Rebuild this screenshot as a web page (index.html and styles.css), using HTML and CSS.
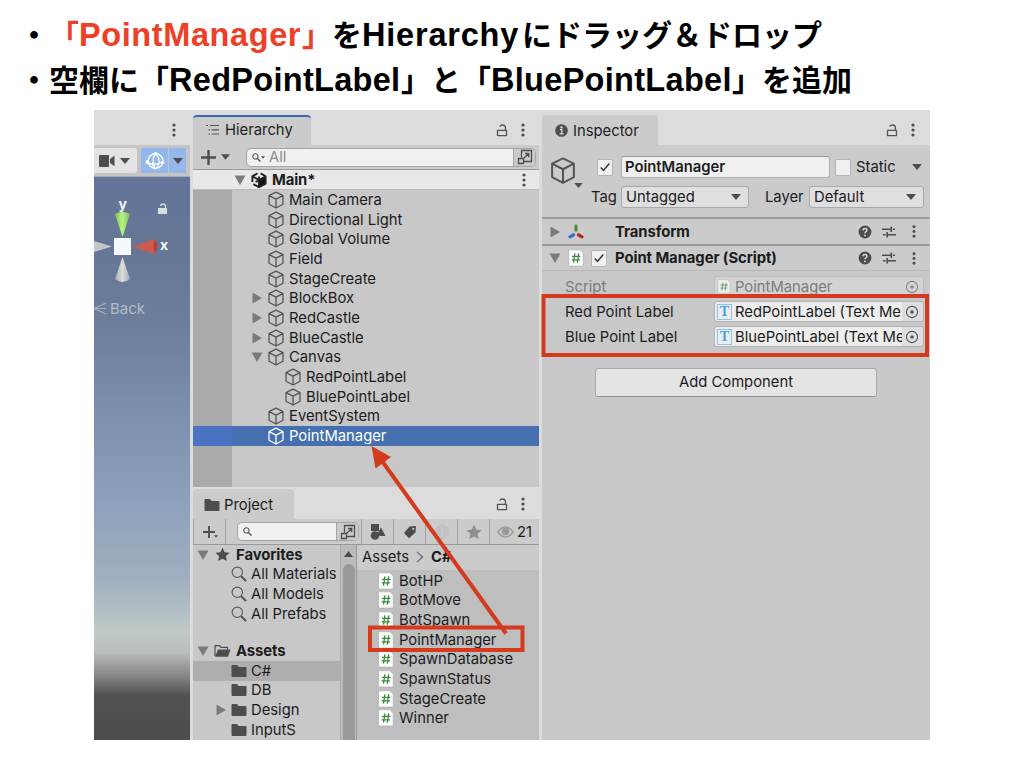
FILE: index.html
```html
<!DOCTYPE html>
<html lang="ja">
<head>
  <meta charset="UTF-8">
  <meta name="viewport" content="width=device-width, initial-scale=1.0">
  <title>PointManager</title>
  <link rel="stylesheet" href="styles.css">
</head>
<body>

  <!-- Icon definitions -->
  <svg class="defs" width="0" height="0">
    <symbol id="cube" viewBox="0 0 18 18">
      <path d="M9 1.2 16 4.6V13.2L9 17 2 13.2V4.6ZM2 4.6 9 8.2 16 4.6M9 8.2V17" fill="none" stroke="currentColor" stroke-width="1.3" stroke-linejoin="round"/>
    </symbol>
    <symbol id="unity" viewBox="0 0 18 18">
      <path d="M9 9V16.4L15.8 12.8V5.2Z" fill="#111"/>
      <path d="M7.4 2.4 2.4 5.2V11M10.6 2.4 15.6 5.2V12.6L9 16.2 3.4 13.2M2.4 5.2 9 9 15.6 5.2M9 9V16M9 9V5.5M9 9 5.6 11" fill="none" stroke="#222" stroke-width="1.9"/>
    </symbol>
    <symbol id="down" viewBox="0 0 12 12"><path d="M.5 1.5H11.5L6 11Z" fill="currentColor"/></symbol>
    <symbol id="right" viewBox="0 0 12 12"><path d="M1.5 .5V11.5L11 6Z" fill="currentColor"/></symbol>
    <symbol id="caret" viewBox="0 0 10 6"><path d="M0 0H10L5 6Z" fill="currentColor"/></symbol>
    <symbol id="dots" viewBox="0 0 4 14">
      <circle cx="2" cy="2" r="1.6"/><circle cx="2" cy="7" r="1.6"/><circle cx="2" cy="12" r="1.6"/>
    </symbol>
    <symbol id="lock" viewBox="0 0 12 14">
      <path d="M1.5 7.4H10.5V12.6H1.5ZM9.4 7V4.2C9.4 2.6 8.3 2 6.6 2 5.2 2 4.2 2.4 3.8 3.4" fill="none" stroke="currentColor" stroke-width="1.3" stroke-linejoin="round"/>
    </symbol>
    <symbol id="plus" viewBox="0 0 14 14"><path d="M7 0V14M0 7H14" stroke="currentColor" stroke-width="2.2"/></symbol>
    <symbol id="popout" viewBox="0 0 16 16">
      <path d="M4.5 8.5V1.5H14.5V12.5H7M1.5 9.5H6.5V14.5H1.5ZM7 9 11.5 4.7M8 4.5H11.7V8.2" fill="none" stroke="currentColor" stroke-width="1.3"/>
    </symbol>
    <symbol id="find" viewBox="0 0 16 16">
      <circle cx="6.3" cy="6.3" r="5.2" fill="none" stroke="currentColor" stroke-width="1.1"/>
      <path d="M10.2 10.2 15 15" stroke="currentColor" stroke-width="2.1"/>
    </symbol>
    <symbol id="mini-find" viewBox="0 0 10 10">
      <circle cx="3.8" cy="3.8" r="2.9" fill="none" stroke="currentColor" stroke-width="1.2"/>
      <path d="M6 6 9.4 9.4" stroke="currentColor" stroke-width="1.6"/>
    </symbol>
    <symbol id="folder" viewBox="0 0 16 14"><path d="M.5 2Q.5 1 1.5 1H6L7.6 3H14.5Q15.5 3 15.5 4V12Q15.5 13 14.5 13H1.5Q.5 13 .5 12Z" fill="currentColor"/></symbol>
    <symbol id="folder-open" viewBox="0 0 17 14">
      <path d="M1 12V1.6H5.6L7 3.4H13.5V5.6" fill="none" stroke="currentColor" stroke-width="1.2"/>
      <path d="M4 5.6H16.5L14 12.8H1Z" fill="currentColor"/>
    </symbol>
    <symbol id="star" viewBox="0 0 16 16"><path d="M8 .8 10.2 5.6 15.5 6.2 11.6 9.8 12.6 15 8 12.4 3.4 15 4.4 9.8 .5 6.2 5.8 5.6Z" fill="currentColor"/></symbol>
    <symbol id="script" viewBox="0 0 16 18">
      <path d="M1.5 .8H12L15.2 4V16Q15.2 17 14.2 17H1.5Q.6 17 .6 16V1.7Q.6 .8 1.5 .8Z" fill="#fff" stroke="#b0b0b0" stroke-width=".7"/>
      <path d="M6.9 4.4 5.5 13.6M10.7 4.4 9.3 13.6M4 7.3H12.4M3.6 10.8H12" stroke="#3d8a3d" stroke-width="1.3"/>
    </symbol>
    <symbol id="help" viewBox="0 0 14 14">
      <circle cx="7" cy="7" r="6.4" fill="#4d4d4d"/>
      <path d="M5 5.4Q5.1 3.5 7 3.5T9 5.2Q9 6.3 7.8 6.8 7 7.2 7 8.2" fill="none" stroke="#ddd" stroke-width="1.4"/>
      <circle cx="7" cy="10.4" r=".9" fill="#ddd"/>
    </symbol>
    <symbol id="preset" viewBox="0 0 14 12">
      <path d="M0 3.3H8.6M11 3.3H13M9.3 .5V6M1 8.8H3.6M6 8.8H14M5.2 6V11.6" fill="none" stroke="#4d4d4d" stroke-width="1.6"/>
    </symbol>
    <symbol id="check" viewBox="0 0 12 12"><path d="M1.8 6.4 4.5 9.4 10.3 2.4" fill="none" stroke="#333" stroke-width="1.5"/></symbol>
    <symbol id="picker" viewBox="0 0 14 14">
      <circle cx="7" cy="7" r="5.6" fill="none" stroke="#555" stroke-width="1.1"/><circle cx="7" cy="7" r="1.8" fill="#555"/>
    </symbol>
  </svg>

  <!-- Slide bullets -->
  <ul class="bullets">
    <li>・<span class="red">「<span class="latin w-name">PointManager</span>」</span>を<span class="latin w-hierarchy">Hierarchy</span>にドラッグ＆ドロップ</li>
    <li>・空欄に「<span class="latin w-red">RedPointLabel</span>」と「<span class="latin w-blue">BluePointLabel</span>」を追加</li>
  </ul>

  <div class="editor">

    <!-- Scene view -->
    <section class="scene">
      <div class="tab-bar"><svg class="dots"><use href="#dots"/></svg></div>
      <div class="scene-tools">
        <div class="camera">
          <svg width="16" height="12" viewBox="0 0 16 12"><rect width="10" height="12" rx="1"/><path d="M11 4 15.5 .8V11.2L11 8Z"/></svg>
          <svg class="caret"><use href="#caret"/></svg>
        </div>
        <div class="gizmo-btn">
          <svg width="20" height="18" viewBox="0 0 20 18" fill="none" stroke="#fff" stroke-width="1.2">
            <circle cx="10.5" cy="9" r="7.4"/><path d="M10.500 1.600Q7 6 8.500 12.500T10.500 16.400M10.500 1.600Q15 6 14 11T10.500 16.400M2 10Q5 12 8.500 12.300T18 10"/>
            <g fill="#fff"><circle cx="10.500" cy="1.800" r="1.200"/><circle cx="2.200" cy="10" r="1.300"/><circle cx="17.500" cy="10.500" r="1.200"/><circle cx="8.500" cy="12.500" r="1.300"/></g>
          </svg>
        </div>
        <div class="gizmo-drop"><svg class="caret"><use href="#caret"/></svg></div>
      </div>
      <div class="viewport">
        <svg width="96" height="150" viewBox="0 0 96 150">
          <defs>
            <linearGradient id="green"><stop offset="0" stop-color="#83c655"/><stop offset=".5" stop-color="#b6f584"/><stop offset="1" stop-color="#7cba56"/></linearGradient>
            <linearGradient id="grey"><stop offset="0" stop-color="#aaa"/><stop offset=".5" stop-color="#ddd"/><stop offset="1" stop-color="#aaa"/></linearGradient>
          </defs>
          <path d="M21 37Q28.500 33 36 37L28.500 60Z" fill="url(#green)"/>
          <path d="M28.500 80 21 102Q28.500 108 36 102Z" fill="url(#grey)"/>
          <path d="M0 64 18 69.500 0 75Z" fill="#c4c7ca"/>
          <path d="M39 69.500 61 62Q66 69.500 61 77Z" fill="#cf5a4c"/>
          <path d="M61 62Q66 69.500 61 77 58 69.500 61 62Z" fill="#a84840"/>
          <rect x="20" y="61" width="17" height="17" fill="#f5f8ff"/>
          <rect x="64" y="31" width="9" height="6" fill="#d9dde4"/>
          <path d="M71.500 31V29Q71 27 69 27T66.500 29" fill="none" stroke="#d9dde4" stroke-width="1.300"/>
          <path d="M12 126 0 131.500 12 137M0 131.500H12" fill="none" stroke="#a5afbd" stroke-width="1.200"/>
          <text x="24.500" y="32" class="axis">y</text>
          <text x="66" y="73" class="axis">x</text>
          <text x="16" y="137" class="back">Back</text>
        </svg>
      </div>
    </section>

    <!-- Hierarchy + Project column -->
    <div class="middle">
      <section class="hierarchy">
        <div class="tab-bar">
          <div class="tab active">
            <svg width="14" height="12" viewBox="0 0 14 12" fill="none" stroke="#555" stroke-width="1.2"><path d="M0 1.500H2M4 1.500H13M2.500 5.800H4M5.500 5.800H13M2.500 10H4M5.500 10H13"/></svg>
            <span>Hierarchy</span>
          </div>
          <svg class="lock"><use href="#lock"/></svg>
          <svg class="dots"><use href="#dots"/></svg>
        </div>
        <div class="tools">
          <svg class="plus"><use href="#plus"/></svg>
          <svg class="caret small"><use href="#caret"/></svg>
          <div class="search">
            <svg class="mini-find"><use href="#mini-find"/></svg><svg class="tiny-caret"><use href="#caret"/></svg>
            <span>All</span>
            <div class="pop"><svg><use href="#popout"/></svg></div>
          </div>
        </div>
        <div class="scene-row">
          <svg class="arrow"><use href="#down"/></svg>
          <svg class="cube"><use href="#unity"/></svg>
          <b>Main*</b>
          <svg class="dots"><use href="#dots"/></svg>
        </div>
        <div class="tree">
          <div class="row"><i></i><svg class="cube"><use href="#cube"/></svg>Main Camera</div>
          <div class="row"><i></i><svg class="cube"><use href="#cube"/></svg>Directional Light</div>
          <div class="row"><i></i><svg class="cube"><use href="#cube"/></svg>Global Volume</div>
          <div class="row"><i></i><svg class="cube"><use href="#cube"/></svg>Field</div>
          <div class="row"><i></i><svg class="cube"><use href="#cube"/></svg>StageCreate</div>
          <div class="row"><i><svg class="arrow"><use href="#right"/></svg></i><svg class="cube"><use href="#cube"/></svg>BlockBox</div>
          <div class="row"><i><svg class="arrow"><use href="#right"/></svg></i><svg class="cube"><use href="#cube"/></svg>RedCastle</div>
          <div class="row"><i><svg class="arrow"><use href="#right"/></svg></i><svg class="cube"><use href="#cube"/></svg>BlueCastle</div>
          <div class="row"><i><svg class="arrow"><use href="#down"/></svg></i><svg class="cube"><use href="#cube"/></svg>Canvas</div>
          <div class="row child"><i></i><svg class="cube"><use href="#cube"/></svg>RedPointLabel</div>
          <div class="row child"><i></i><svg class="cube"><use href="#cube"/></svg>BluePointLabel</div>
          <div class="row"><i></i><svg class="cube"><use href="#cube"/></svg>EventSystem</div>
          <div class="row selected"><i></i><svg class="cube"><use href="#cube"/></svg>PointManager</div>
        </div>
      </section>

      <section class="project">
        <div class="tab-bar">
          <div class="tab">
            <svg class="folder"><use href="#folder"/></svg>
            <span>Project</span>
          </div>
          <svg class="lock"><use href="#lock"/></svg>
          <svg class="dots"><use href="#dots"/></svg>
        </div>
        <div class="tools">
          <div class="add"><svg class="plus"><use href="#plus"/></svg><svg class="tiny-caret"><use href="#caret"/></svg></div>
          <div class="search">
            <svg class="mini-find"><use href="#mini-find"/></svg>
            <div class="pop"><svg><use href="#popout"/></svg></div>
          </div>
          <div class="tool"><svg width="16" height="16" viewBox="0 0 16 16" fill="#4d4d4d"><rect x="1" y="0" width="8" height="7"/><circle cx="5" cy="11.500" r="4.300"/><path d="M11 3.500 15.500 12H9.500L8 8.500Z"/></svg></div>
          <div class="tool"><svg width="14" height="14" viewBox="0 0 14 14"><path d="M6.500 1.500 12 1Q13 1 13 2L12.500 7.500 6 13.200 1 8Z" fill="#4d4d4d"/><circle cx="10.300" cy="3.800" r="1.100" fill="#ccc"/></svg></div>
          <div class="tool"><svg width="16" height="16" viewBox="0 0 16 16"><circle cx="8" cy="8" r="7.500" fill="#c2c2c2"/><path d="M8 3.500V9M8 10.500V12.500" stroke="#cbcbcb" stroke-width="2"/></svg></div>
          <div class="tool"><svg class="grey-star"><use href="#star"/></svg></div>
          <div class="tool count"><svg width="17" height="12" viewBox="0 0 17 12" fill="none" stroke="#999" stroke-width="1.300"><path d="M.8 6Q8.500-4 16.200 6 8.500 16 .8 6Z"/><circle cx="8.500" cy="5.500" r="3" fill="#999"/></svg><span>21</span></div>
        </div>
        <div class="project-body">
          <div class="folders">
            <div class="row"><svg class="arrow"><use href="#down"/></svg><svg class="star"><use href="#star"/></svg><b>Favorites</b></div>
            <div class="row sub"><svg class="find"><use href="#find"/></svg>All Materials</div>
            <div class="row sub"><svg class="find"><use href="#find"/></svg>All Models</div>
            <div class="row sub"><svg class="find"><use href="#find"/></svg>All Prefabs</div>
            <div class="row assets"><svg class="arrow"><use href="#down"/></svg><svg class="open"><use href="#folder-open"/></svg><b>Assets</b></div>
            <div class="row sub current"><svg class="folder"><use href="#folder"/></svg>C#</div>
            <div class="row sub"><svg class="folder"><use href="#folder"/></svg>DB</div>
            <div class="row sub expandable"><svg class="arrow"><use href="#right"/></svg><svg class="folder"><use href="#folder"/></svg>Design</div>
            <div class="row sub"><svg class="folder"><use href="#folder"/></svg>InputS</div>
          </div>
          <div class="scrollbar"><svg width="9" height="6" viewBox="0 0 9 6"><path d="M0 6H9L4.500 0Z" fill="#4d4d4d"/></svg><div class="thumb"></div></div>
          <div class="files">
            <div class="crumbs"><span>Assets</span><svg width="8" height="12" viewBox="0 0 8 12"><path d="M1 1 6.500 6 1 11" fill="none" stroke="#777" stroke-width="1.500"/></svg><b>C#</b></div>
            <div class="row"><svg class="script"><use href="#script"/></svg>BotHP</div>
            <div class="row"><svg class="script"><use href="#script"/></svg>BotMove</div>
            <div class="row"><svg class="script"><use href="#script"/></svg>BotSpawn</div>
            <div class="row"><svg class="script"><use href="#script"/></svg>PointManager</div>
            <div class="row"><svg class="script"><use href="#script"/></svg>SpawnDatabase</div>
            <div class="row"><svg class="script"><use href="#script"/></svg>SpawnStatus</div>
            <div class="row"><svg class="script"><use href="#script"/></svg>StageCreate</div>
            <div class="row"><svg class="script"><use href="#script"/></svg>Winner</div>
          </div>
        </div>
      </section>
    </div>

    <!-- Inspector -->
    <section class="inspector">
      <div class="tab-bar">
        <div class="tab">
          <svg width="13" height="13" viewBox="0 0 13 13"><circle cx="6.500" cy="6.500" r="6.300" fill="#4d4d4d"/><circle cx="6.500" cy="3.400" r="1.200" fill="#ddd"/><path d="M5 5.700H6.800V9.700M4.600 9.800H8.600" fill="none" stroke="#ddd" stroke-width="1.300"/></svg>
          <span>Inspector</span>
        </div>
        <svg class="lock"><use href="#lock"/></svg>
        <svg class="dots"><use href="#dots"/></svg>
      </div>
      <div class="object">
        <div class="object-icon"><svg class="big-cube"><use href="#cube"/></svg><svg class="corner-caret"><use href="#caret"/></svg></div>
        <div class="object-fields">
          <div class="line name-line">
            <div class="checkbox"><svg><use href="#check"/></svg></div>
            <div class="name-field">PointManager</div>
            <div class="checkbox"></div>
            <span class="static">Static</span>
            <svg class="caret"><use href="#caret"/></svg>
          </div>
          <div class="line tag-line">
            <span class="label">Tag</span>
            <div class="dropdown tag">Untagged<svg class="caret"><use href="#caret"/></svg></div>
            <span class="label layer-label">Layer</span>
            <div class="dropdown layer">Default<svg class="caret"><use href="#caret"/></svg></div>
          </div>
        </div>
      </div>
      <div class="component">
        <svg class="arrow"><use href="#right"/></svg>
        <svg class="axes" viewBox="0 0 16 16" fill="none" stroke-width="3.200" stroke-linecap="round"><path d="M8 2V6" stroke="#4a8c3a"/><path d="M5.500 10.800 2 12.800" stroke="#2f6fd0"/><path d="M10.500 10.800 14 12.800" stroke="#b3261e"/></svg>
        <b class="transform">Transform</b>
        <svg class="help"><use href="#help"/></svg><svg class="preset"><use href="#preset"/></svg><svg class="dots"><use href="#dots"/></svg>
      </div>
      <div class="component">
        <svg class="arrow"><use href="#down"/></svg>
        <svg class="script"><use href="#script"/></svg>
        <div class="checkbox"><svg><use href="#check"/></svg></div>
        <b>Point Manager (Script)</b>
        <svg class="help"><use href="#help"/></svg><svg class="preset"><use href="#preset"/></svg><svg class="dots"><use href="#dots"/></svg>
      </div>
      <div class="props">
        <div class="prop disabled">
          <span>Script</span>
          <div class="field"><svg class="script"><use href="#script"/></svg><em>PointManager</em><svg class="picker"><use href="#picker"/></svg></div>
        </div>
        <div class="prop">
          <span>Red Point Label</span>
          <div class="field"><div class="text-icon">T</div><em>RedPointLabel (Text Me</em><svg class="picker"><use href="#picker"/></svg></div>
        </div>
        <div class="prop">
          <span>Blue Point Label</span>
          <div class="field"><div class="text-icon">T</div><em>BluePointLabel (Text Me</em><svg class="picker"><use href="#picker"/></svg></div>
        </div>
      </div>
      <button class="add-component">Add Component</button>
    </section>

    <!-- Red marks and drag arrow -->
    <svg class="marks" viewBox="94 110 836 630">
      <rect x="543.500" y="296" width="383.500" height="59"/>
      <rect x="370" y="627.500" width="152.500" height="22.500"/>
      <path d="M506 633.500 382 461"/>
      <path class="head" d="M371.500 446 391 457 375.500 468.500Z"/>
    </svg>
  </div>

</body>
</html>
```

FILE: styles.css
```css
/* General */
body {
  margin: 0;
  width: 1024px;
  height: 768px;
  overflow: hidden;
  background: #fff;
  font-family: Inter, "Noto Sans", sans-serif;
  font-size: 14.8px;
  color: #1c1c1c;
}

* {
  box-sizing: border-box;
}

svg {
  display: block;
  flex-shrink: 0;
}

.defs {
  position: absolute;
}

/* Slide text */
.bullets {
  height: 110px;
  margin: 0;
  padding: 11px 0 0 19px;
  list-style: none;
  font-family: "Noto Sans CJK JP", sans-serif;
  font-size: 30px;
  font-weight: bold;
  line-height: 45px;
  color: #000;
  white-space: nowrap;
  text-spacing-trim: space-all;
}

.bullets li {
  height: 45px;
}

.red {
  color: #ee4026;
}

.latin {
  display: inline-block;
  font-family: "Liberation Sans", sans-serif;
  font-size: 32.5px;
  line-height: 40px;
}

.w-name { width: 223px; letter-spacing: 0.6px; }
.w-hierarchy { width: 160px; letter-spacing: 0.8px; }
.w-red { width: 232px; letter-spacing: 0.3px; }
.w-blue { width: 241px; letter-spacing: 0.3px; }

/* Editor window */
.editor {
  position: relative;
  display: flex;
  gap: 3px;
  width: 836px;
  height: 630px;
  margin-left: 94px;
  background: #dcdcdc;
  overflow: hidden;
}

.tab-bar {
  display: flex;
  align-items: center;
  height: 35px;
  padding: 5px 14px 0 0;
  background: #dcdcdc;
}

.tab {
  display: flex;
  align-items: center;
  height: 30px;
  padding: 1px 0 0 13px;
  margin-right: auto;
  background: #cbcbcb;
  border-radius: 4px 4px 0 0;
}

.tab.active {
  border-top: 2px solid #3a69b0;
  padding: 0 0 2px 13px;
}

.dots {
  width: 4px;
  height: 14px;
  fill: #4d4d4d;
}

.lock {
  width: 12px;
  height: 14px;
  margin-right: 13px;
  color: #555;
}

.caret {
  width: 10px;
  height: 6px;
  color: #4d4d4d;
}

.arrow {
  width: 12px;
  height: 12px;
  color: #7b7b7b;
}

.row {
  display: flex;
  align-items: center;
  height: 19.7px;
  white-space: nowrap;
}

.cube {
  width: 18px;
  height: 18px;
  margin-right: 4px;
  color: #555;
}

/* Scene view */
.scene {
  width: 96px;
}

.scene .tab-bar {
  justify-content: flex-end;
}

.scene-tools {
  display: flex;
  align-items: center;
  height: 32px;
  background: #c5c5c5;
  border-bottom: 1px solid #aaa;
}

.camera {
  display: flex;
  align-items: center;
  gap: 5px;
  width: 43px;
  height: 25px;
  padding-left: 5px;
  background: #e3e3e3;
  border-radius: 0 3px 3px 0;
  fill: #4d4d4d;
}

.gizmo-btn,
.gizmo-drop {
  display: flex;
  align-items: center;
  justify-content: center;
  width: 27px;
  height: 25px;
  margin-left: 4px;
  background: #95b8ec;
}

.gizmo-drop {
  width: 17px;
  margin-left: 1px;
}

.viewport {
  height: 563px;
  background: linear-gradient(#62759a 0, #667795 70px, #6c7e9b 150px, #8ca0bc 320px, #a0afc0 400px, #bec9c8 456px, #b8bdb9 476px, #878684 499px, #545250 518px, #4e4b4b 563px);
}

.axis {
  font-size: 14px;
  font-weight: bold;
  fill: #f4f4f4;
}

.back {
  font-size: 15px;
  fill: #b3bcc8;
}

/* Hierarchy */
.middle {
  width: 346px;
}

.hierarchy {
  height: 377px;
  background: #c8c8c8;
}

.hierarchy .tab {
  width: 118px;
}

.hierarchy .tab span {
  margin-left: 5px;
}

.tools {
  display: flex;
  align-items: center;
  background: #cbcbcb;
}

.hierarchy .tools {
  height: 25px;
  padding: 0 3px 0 8px;
  border-bottom: 1px solid #999;
}

.plus {
  width: 15px;
  height: 15px;
  color: #4d4d4d;
}

.caret.small {
  width: 9px;
  margin-left: 5px;
}

.search {
  display: flex;
  align-items: center;
  height: 19px;
  padding-left: 5px;
  background: #f0f0f0;
  border: 1px solid #a5a5a5;
  border-radius: 5px;
  color: #8a8a8a;
  overflow: hidden;
}

.hierarchy .search {
  flex: 1;
  margin-left: 16px;
}

.mini-find {
  width: 9px;
  height: 9px;
  color: #555;
}

.tiny-caret {
  width: 4px;
  height: 3px;
  margin-right: 4px;
  color: #4d4d4d;
}

.pop {
  display: flex;
  align-items: center;
  justify-content: center;
  width: 22px;
  height: 100%;
  margin-left: auto;
  background: #cbcbcb;
  border-left: 1px solid #a5a5a5;
  color: #4d4d4d;
}

.pop svg {
  width: 16px;
  height: 16px;
}

.scene-row {
  display: flex;
  align-items: center;
  height: 20px;
  padding: 0 13px 0 41px;
  background: #e8e8e8;
  border-bottom: 1px solid #bdbdbd;
}

.scene-row .cube {
  margin-left: 4px;
}

.scene-row .dots {
  margin-left: auto;
}

.scene-row b {
  letter-spacing: -0.1px;
}

.tree {
  height: 297px;
  background: linear-gradient(90deg, #aaa 39px, #c8c8c8 39px);
}

.tree .row {
  padding-left: 58px;
}

.tree .row.child {
  padding-left: 75px;
}

.tree i {
  width: 16px;
}

.tree .selected {
  background: linear-gradient(90deg, #4a73c4 39px, #456fae 39px);
  color: #fff;
}

.tree .selected .cube {
  color: #fff;
}

/* Project */
.project {
  height: 253px;
}

.project .tab-bar {
  height: 32px;
  padding-top: 2px;
}

.project .tab {
  width: 101px;
  padding-top: 2px;
  padding-left: 11px;
}

.project .tab span {
  margin-left: 4px;
}

.folder {
  width: 16px;
  height: 14px;
  margin-right: 4px;
  color: #4d4d4d;
}

.tab .folder {
  margin-right: 0;
}

.project .tools {
  height: 26px;
  border-bottom: 1px solid #999;
}

.add {
  display: flex;
  align-items: center;
  width: 33px;
  height: 25px;
  padding-left: 9px;
  border-right: 1px solid #a3a3a3;
  border-left: 1px solid #a3a3a3;
}

.add .plus {
  width: 12px;
  height: 12px;
}

.add .tiny-caret {
  align-self: flex-end;
  margin: 0 0 6px -1px;
}

.project .search {
  width: 122px;
  margin: 0 2px 0 11px;
}

.tool {
  display: flex;
  align-items: center;
  justify-content: center;
  width: 32px;
  height: 25px;
  border-left: 1px solid #a3a3a3;
}

.grey-star {
  width: 16px;
  height: 16px;
  color: #8e8e8e;
}

.count {
  flex: 1;
  gap: 3px;
}

.project-body {
  display: flex;
  height: 195px;
}

.folders {
  width: 147px;
  background: #c8c8c8;
  overflow: hidden;
}

.folders .row {
  height: 19.6px;
  padding-left: 4px;
}

.folders .star {
  width: 15px;
  height: 15px;
  margin: 0 6px 0 6px;
  color: #4d4d4d;
}

.folders .open {
  width: 17px;
  height: 14px;
  margin: 0 5px 0 5px;
  color: #4d4d4d;
}

.folders b {
  letter-spacing: -0.05px;
}

.folders .row.sub {
  padding-left: 38px;
}

.folders .row.expandable {
  padding-left: 22px;
}

.expandable .arrow {
  margin-right: 4px;
}

.find {
  width: 16px;
  height: 16px;
  margin-right: 4px;
  color: #555;
}

.folders .assets {
  margin-top: 18px;
}

.folders .current {
  background: #aeaeae;
}

.scrollbar {
  display: flex;
  flex-direction: column;
  align-items: center;
  gap: 7px;
  width: 17px;
  padding-top: 6px;
  background: #bcbcbc;
  border-right: 1px solid #999;
  border-left: 1px solid #aaa;
}

.thumb {
  flex: 1;
  width: 12px;
  background: #999;
  border-radius: 6px 6px 0 0;
}

.files {
  flex: 1;
  background: #bebebe;
}

.crumbs {
  display: flex;
  align-items: center;
  gap: 7px;
  height: 25px;
  margin-bottom: 0.8px;
  padding: 0 0 2px 5px;
  background: #cbcbcb;
}

.files .row {
  padding-left: 21px;
}

.script {
  width: 16px;
  height: 18px;
  margin-right: 5px;
}

/* Inspector */
.inspector {
  width: 388px;
  background: #c8c8c8;
}

.inspector .tab {
  width: 116px;
}

.inspector .tab span {
  margin-left: 5px;
}

.inspector .tab-bar {
  padding-right: 15px;
}

.object {
  display: flex;
  height: 74px;
  padding: 11px 6px 0 7px;
  background: #cbcbcb;
  border-bottom: 2px solid #9b9b9b;
}

.object-icon {
  width: 42px;
}

.big-cube {
  width: 28px;
  height: 29px;
  color: #555;
}

.corner-caret {
  width: 9px;
  height: 5px;
  margin: -2px 0 0 25px;
  color: #4d4d4d;
}

.line {
  display: flex;
  align-items: center;
}

.object-fields {
  flex: 1;
}

.name-line {
  height: 22px;
  padding-left: 6px;
}

.checkbox {
  display: flex;
  align-items: center;
  justify-content: center;
  width: 16px;
  height: 17px;
  background: #f0f0f0;
  border: 1px solid #b5b5b5;
  border-radius: 2px;
}

.checkbox svg {
  width: 12px;
  height: 12px;
}

.name-field {
  width: 209px;
  height: 22px;
  margin: 0 5px 0 8px;
  padding-left: 3px;
  background: #f0f0f0;
  border: 1px solid #b0b0b0;
  border-top-color: #999;
  border-radius: 3px;
  font-weight: 600;
  line-height: 21px;
}

.static {
  width: 61px;
  padding-left: 5px;
}

.tag-line {
  margin-top: 8px;
}

.label {
  width: 30px;
}

.layer-label {
  width: 44px;
  margin-left: 16px;
}

.dropdown {
  display: flex;
  align-items: center;
  justify-content: space-between;
  height: 22px;
  padding: 0 7px 1px 4px;
  background: #dfdfdf;
  border: 1px solid #aaa;
  border-radius: 3px;
}

.tag {
  width: 128px;
}

.layer {
  width: 115px;
}

.component {
  display: flex;
  align-items: center;
  height: 27px;
  padding: 0 14px 0 7px;
  background: #cbcbcb;
  border-bottom: 2px solid #9b9b9b;
}

.component + .component {
  height: 25px;
  border-bottom: 1px solid #b8b8b8;
}

.component .script {
  margin: 0 7px 0 7px;
}

.component b {
  flex: 1;
  margin-left: 8px;
  letter-spacing: -0.05px;
}

.component .transform {
  margin-left: 31px;
}

.axes {
  width: 16px;
  height: 16px;
  margin-left: 7px;
}

.help {
  width: 14px;
  height: 14px;
}

.preset {
  width: 14px;
  height: 12px;
  margin: 0 16px 0 10px;
}

.component .dots {
  height: 13px;
}

.prop {
  display: flex;
  align-items: center;
  height: 25px;
  padding: 0 6px 0 23px;
}

.prop > span {
  width: 149px;
}

.props {
  padding-top: 3px;
}

.disabled {
  color: #7c7c7c;
}

.field {
  display: flex;
  align-items: center;
  width: 210px;
  height: 21px;
  padding: 0 4px 0 2px;
  background: linear-gradient(90deg, #ededed 187px, #dedede 187px);
  border: 1px solid #b2b2b2;
  border-radius: 3px;
}

.disabled .field {
  background: #d3d3d3;
  border-color: #bdbdbd;
}

.disabled .field svg {
  opacity: 0.6;
}

.field em {
  width: 167px;
  font-style: normal;
  white-space: nowrap;
  overflow: hidden;
}

.field .script {
  width: 14px;
  height: 15px;
  margin: 0 4px 0 0;
}

.picker {
  width: 14px;
  height: 14px;
  margin-left: 3px;
}

.text-icon {
  flex-shrink: 0;
  width: 15px;
  height: 16px;
  margin-right: 3px;
  border: 1px solid #8cc4ec;
  font: bold 14px/14px "Liberation Serif", serif;
  text-align: center;
  color: #45a4e8;
}

.add-component {
  display: block;
  width: 282px;
  height: 29px;
  margin: 19px 0 0 53px;
  padding: 0 0 1px;
  background: #e4e4e4;
  border: 1px solid #aaa;
  border-bottom-color: #909090;
  border-radius: 3px;
  font: inherit;
  color: inherit;
}

/* Overlay marks */
.marks {
  position: absolute;
  inset: 0;
  fill: none;
  stroke: #d33a1e;
  stroke-width: 4;
}

.marks .head {
  fill: #d33a1e;
  stroke: none;
}
```
